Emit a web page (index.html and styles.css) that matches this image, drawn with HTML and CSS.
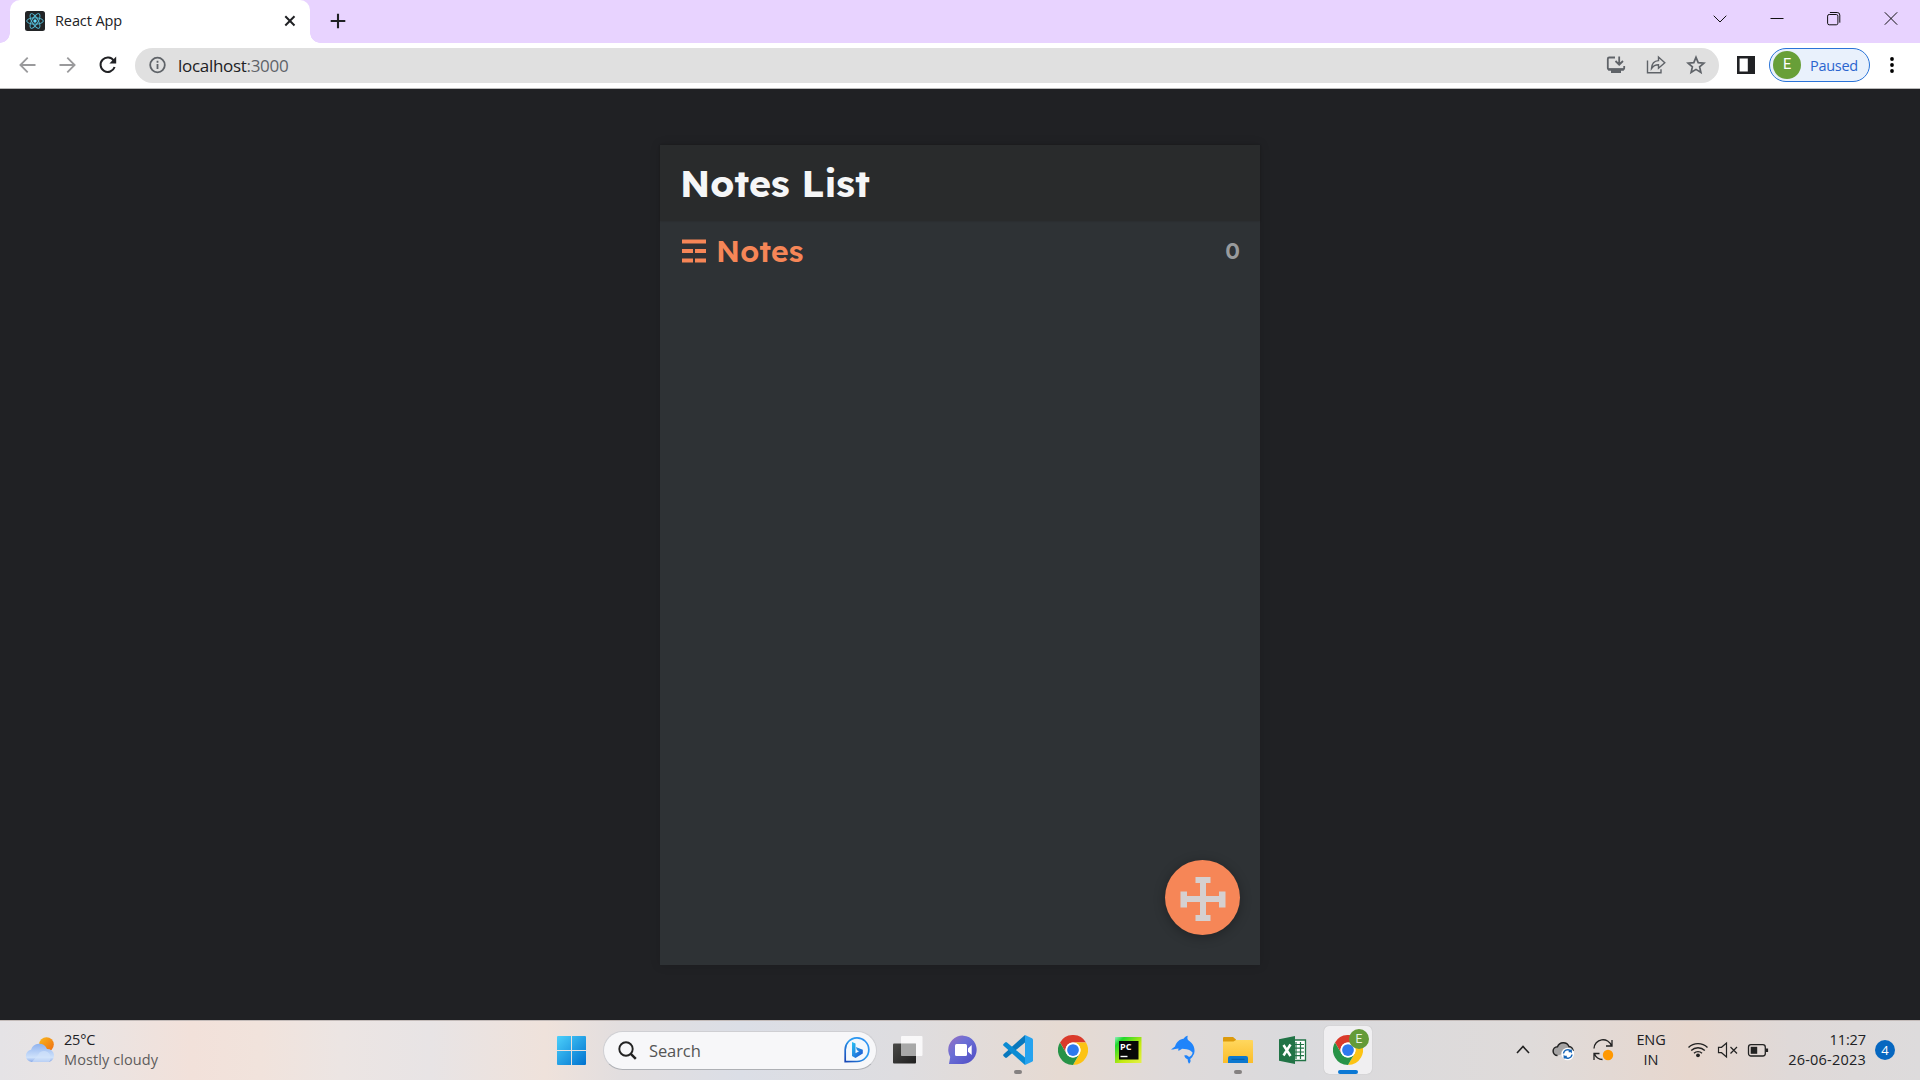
FILE: index.html
```html
<!DOCTYPE html>
<html lang="en">
<head>
<meta charset="utf-8">
<title>React App</title>
<link rel="stylesheet" href="styles.css">
</head>
<body>
<svg class="defs" width="0" height="0">
  <defs>
    <linearGradient id="win" x1="0" y1="0" x2="1" y2="1"><stop offset="0" stop-color="#4cd0fb"/><stop offset="1" stop-color="#0072cf"/></linearGradient>
    <linearGradient id="sun" x1="0" y1="0" x2="1" y2="1"><stop offset="0" stop-color="#f9b91c"/><stop offset="1" stop-color="#ef6a12"/></linearGradient>
    <linearGradient id="cloud" x1="0" y1="0" x2="0" y2="1"><stop offset="0" stop-color="#8fb2ee"/><stop offset=".75" stop-color="#cfe2fb"/><stop offset="1" stop-color="#8aaae8"/></linearGradient>
    <linearGradient id="bing" x1="0" y1="0" x2="1" y2="1"><stop offset="0" stop-color="#29c3f3"/><stop offset="1" stop-color="#1b4fd0"/></linearGradient>
    <linearGradient id="bingRing" x1="1" y1="0" x2="0" y2="1"><stop offset="0" stop-color="#2f8cf0"/><stop offset=".45" stop-color="#2a9df0"/><stop offset="1" stop-color="#1745b5"/></linearGradient>
    <linearGradient id="chat" x1="0" y1="0" x2="1" y2="1"><stop offset="0" stop-color="#9a6fc0"/><stop offset=".4" stop-color="#6b6fd6"/><stop offset="1" stop-color="#4e4bc4"/></linearGradient>
    <linearGradient id="folder" x1="0" y1="0" x2="0" y2="1"><stop offset="0" stop-color="#ffd75e"/><stop offset="1" stop-color="#fbbd2a"/></linearGradient>
    <linearGradient id="dark" x1="0" y1="0" x2="1" y2="1"><stop offset="0" stop-color="#4a4a48"/><stop offset="1" stop-color="#1f1f1f"/></linearGradient>
    <linearGradient id="pc" x1="0" y1="0" x2="1" y2="1"><stop offset="0" stop-color="#8df0c0"/><stop offset=".18" stop-color="#21d82b"/><stop offset=".6" stop-color="#c4ea10"/><stop offset="1" stop-color="#e6f04a"/></linearGradient>
    <symbol id="chrome" viewBox="0 0 48 48">
      <circle cx="24" cy="24" r="23" fill="#fff"/>
      <path fill="#da3a2b" d="M3.2 12A24 24 0 0 1 44.8 12H24A12 12 0 0 0 13.6 30Z"/>
      <path fill="#fcc314" d="M44.8 12A24 24 0 0 1 24 48L34.4 30A12 12 0 0 0 24 12Z"/>
      <path fill="#279347" d="M24 48A24 24 0 0 1 3.2 12L13.6 30A12 12 0 0 0 34.4 30Z"/>
      <circle cx="24" cy="24" r="12" fill="#fff"/><circle cx="24" cy="24" r="9.4" fill="#2e79ee"/>
    </symbol>
  </defs>
</svg>

<header class="tabstrip">
  <div class="tab">
    <svg class="favicon" viewBox="0 0 20 20"><rect width="20" height="20" rx="2.5" fill="#222426"/><g fill="none" stroke="#53bcd6" stroke-width=".95"><ellipse cx="10" cy="10" rx="8.3" ry="3.2"/><ellipse cx="10" cy="10" rx="8.3" ry="3.2" transform="rotate(60 10 10)"/><ellipse cx="10" cy="10" rx="8.3" ry="3.2" transform="rotate(120 10 10)"/></g><circle cx="10" cy="10" r="1.7" fill="#61dafb"/></svg>
    <span class="tab-title">React App</span>
    <svg class="tab-close" viewBox="0 0 12 12"><path d="M1.3 1.3l9.2 9.2M10.5 1.3l-9.2 9.2" stroke="#202124" stroke-width="2"/></svg>
  </div>
  <svg class="new-tab" viewBox="0 0 16 16"><path d="M8 .7v14.6M.7 8h14.6" stroke="#202124" stroke-width="2.1"/></svg>
  <div class="window-buttons">
    <svg viewBox="0 0 14 14"><path d="M.7 3.7L7 10l6.300-6.300" /></svg>
    <svg viewBox="0 0 14 14"><path d="M.5 6.500h13"/></svg>
    <svg viewBox="0 0 14 14"><rect x=".6" y="2.500" width="10.300" height="10.300" rx="1.600"/><path d="M2.900.5h7.300a2.600 2.600 0 0 1 2.600 2.600v7.600"/></svg>
    <svg viewBox="0 0 14 14"><path d="M.8.3l12.400 12.400M13.200.3L.8 12.700"/></svg>
  </div>
</header>

<nav class="toolbar">
  <svg class="nav-icon muted" viewBox="0 0 18 18"><path d="M16.500 9H2M8.700 1.700L1.400 9l7.300 7.300"/></svg>
  <svg class="nav-icon muted" viewBox="0 0 18 18"><path d="M.5 9H15M8.300 1.700L15.600 9l-7.300 7.300"/></svg>
  <svg class="nav-icon" viewBox="0 0 18 18"><path d="M14.800 4.800A7.200 7.200 0 1 0 15.600 11"/><path d="M17.200.6v6.800H10.400z" fill="#202124" stroke="none"/></svg>
  <div class="omnibox">
    <svg class="info" viewBox="0 0 18 18"><circle cx="8.500" cy="9" r="7.300"/><path d="M8.500 8v5M8.500 4.800v1.900"/></svg>
    <span class="url">localhost<span class="port">:3000</span></span>
    <div class="omni-actions">
      <svg viewBox="0 0 20 20"><path d="M9 2.500H3.200A1.400 1.400 0 0 0 1.800 3.900v9.200a1.400 1.400 0 0 0 1.400 1.400h13.600a1.400 1.400 0 0 0 1.400-1.400V11M13.200 1.500v8M9.500 6l3.700 3.700L17 6"/><path d="M2 13.200h16v2.200h-3v2.500H5v-2.500H2z" fill="#5f6368" stroke="none"/></svg>
      <svg viewBox="0 0 20 20"><path d="M1.500 5.500v12.200h13.500v-3.500M5.500 13.500c.3-5.200 3-7.700 7-7.900V2l6.300 5.700-6.300 5.600V9.800c-3.200 0-5.300 1.100-7 3.700z" stroke-width="1.400"/></svg>
      <svg viewBox="0 0 20 20"><path d="M10 2.300l2.200 5.300 5.700.5-4.300 3.700 1.300 5.600-4.900-3-4.900 3 1.300-5.600L2.100 8.100l5.700-.5z" stroke-width="1.700"/></svg>
    </div>
  </div>
  <svg class="panel-icon" viewBox="0 0 18 18"><path d="M0 0h18v18H0zM2.600 2.600v12.800h8.200V2.600z" fill="#202124" fill-rule="evenodd"/></svg>
  <div class="profile"><span class="avatar">E</span><span>Paused</span></div>
  <svg class="kebab" viewBox="0 0 4 16"><circle cx="2" cy="2" r="1.900"/><circle cx="2" cy="8" r="1.900"/><circle cx="2" cy="14" r="1.900"/></svg>
</nav>

<main class="page">
  <section class="app">
    <h1 class="app-header">Notes List</h1>
    <div class="notes-header">
      <svg class="list-icon" viewBox="0 0 24 24"><path fill="#f68657" d="M0 .5h24v4H0zM0 10h11v4H0zM13 10h11v4H13zM0 19.500h11v4H0zM13 19.500h11v4H13z"/></svg>
      <h2 class="notes-title">Notes</h2>
      <p class="notes-count">0</p>
    </div>
    <button class="fab" aria-label="Add note"><svg viewBox="0 0 46 46"><path fill="#d5d0d0" d="M15.500 1h15v6H26v13h13v-4.500h6.500v16H39V26H26v13h4.500v6h-15v-6H20V26H7v5.500H.5v-16H7V20h13V7h-4.500z"/></svg></button>
  </section>
</main>

<footer class="taskbar">
  <div class="weather">
    <svg viewBox="0 0 30 26"><circle cx="21.500" cy="7.500" r="7.300" fill="url(#sun)"/><path d="M6.500 25A6.200 6.200 0 0 1 6 12.700 8.500 8.500 0 0 1 22 12a6.600 6.600 0 0 1 2 13z" fill="url(#cloud)"/><path d="M13 18a6.600 6.600 0 1 1 11 7H7" fill="#d2e3fb" opacity=".65"/></svg>
    <div class="weather-text"><span>25°C</span><span class="sub">Mostly cloudy</span></div>
  </div>
  <div class="dock">
    <svg class="start" viewBox="0 0 29 29"><path fill="url(#win)" d="M1 0h13v14H0V1q0-1 1-1zM15 0h13q1 0 1 1v13H15zM0 15h14v14H1q-1 0-1-1zM15 15h14v13q0 1-1 1H15z"/></svg>
    <div class="search">
      <svg class="lens" viewBox="0 0 19 19"><circle cx="8" cy="8" r="6.700" fill="none" stroke="#222" stroke-width="1.900"/><path d="M12.800 12.800l5 5" stroke="#222" stroke-width="2.500"/></svg>
      <span>Search</span>
      <svg class="bing" viewBox="0 0 26 26"><path d="M1.200 24.600V13A11.800 11.800 0 1 1 13 24.500z" fill="#f3f8fd" stroke="url(#bingRing)" stroke-width="1.700"/><path d="M8 5l3.500 1.500v9.800l3.500-2-2-1-1.200-3.200 7 2.700v3.700L11.500 21 8 19z" fill="url(#bing)"/></svg>
    </div>
    <div class="tile"><svg viewBox="0 0 30 30"><rect x="0" y="8.500" width="23" height="20" rx="1" fill="url(#dark)"/><rect x="8" y="1" width="21.500" height="20" rx="1" fill="#fff" opacity=".8"/><path d="M8 8.500h15v12.500H8z" fill="#898989" opacity=".6"/></svg></div>
    <div class="tile"><svg viewBox="0 0 30 30"><path d="M1 29l1.200-7A14.200 14.200 0 1 1 15 29z" fill="url(#chat)"/><rect x="7" y="9" width="12" height="12" rx="1.500" fill="#fff"/><path d="M20 13.500l3.700-3.500v10L20 16.700z" fill="#fff"/></svg></div>
    <div class="tile running"><svg viewBox="0 0 30 30"><path d="M22 0v7.500L4 22.500q-1 .8-1.900 0L.5 21Q-.3 20 .6 19.200z" fill="#0878bd"/><path d="M22 30v-7.500L4 7.500q-1-.8-1.900 0L.5 9q-.8 1 .1 1.800z" fill="#0a8bd3"/><path d="M22 0l7 3.200q1 .5 1 1.500v20.600q0 1-1 1.500L22 30z" fill="#26a3ef"/></svg></div>
    <div class="tile"><svg viewBox="0 0 30 30"><use href="#chrome"/></svg></div>
    <div class="tile"><svg viewBox="0 0 30 30"><rect x="2" y="2" width="26.500" height="26" fill="url(#pc)"/><rect x="6" y="6" width="19.500" height="18.500" fill="#080808"/><text x="7" y="14.700" class="pc-label">PC</text><path d="M7.500 21.500h7" stroke="#fff" stroke-width="1.400"/></svg></div>
    <div class="tile"><svg viewBox="0 0 30 30"><path d="M3 14.500l4-3C8.500 6.500 12 4 15.500 3.700 17 1.700 18.500 1 19.800.8c-.6 1.700-.5 2.800.2 4.200 5.500 3.500 8.300 9.500 5.500 15.500-.5-4.500-4.500-6.500-11.500-6.700-1.500 1.300-3.200 2-4 1.700l.6-2c-2.500.3-4.500 1-7.600 1z" fill="#2084fa"/><path d="M25.400 18.500c-.3 3-1.500 4.300-3.200 5.500.8 2 .3 3.500-1.200 4.700-.8-1.400-1.400-2.700-1.200-4.300-1.600-.7-3.300-2-3.500-4 2.200-.3 3.700.2 4.700 1.500 2-.8 3-2 3.500-4z" fill="#2084fa"/></svg></div>
    <div class="tile running"><svg viewBox="0 0 30 30"><path d="M0 3q0-1 1-1h9l3 2.500v5H0z" fill="#dc9a0c"/><path d="M0 6.500h10.500L13 5h16q1 0 1 1v22H0z" fill="url(#folder)"/><path d="M5 28v-5q0-2 2-2h16q2 0 2 2v5z" fill="#0d78cf"/><path d="M8.500 24.300h13" stroke="#075aa0"/></svg></div>
    <div class="tile"><svg viewBox="0 0 30 30"><path d="M15 5h12.500v20.500H15z" fill="#fff" stroke="#217346" stroke-width="1.300"/><path d="M18 7v17M22.500 7v17M16 9.500h10M16 13.200h10M16 17h10M16 20.700h10" stroke="#217346" stroke-width="1.200"/><path d="M1 4.200L17 1v28L1 25.800z" fill="#217346"/><path d="M5.500 10l7 11M12.500 9.500L5.500 20.500" stroke="#fff" stroke-width="2.500"/></svg></div>
    <div class="tile running active"><svg viewBox="0 0 30 30"><use href="#chrome"/></svg><span class="app-badge">E</span></div>
  </div>
  <div class="tray">
    <svg viewBox="0 0 22 22"><path d="M5 14l6-6.500 6 6.500" stroke-width="1.600"/></svg>
    <svg viewBox="0 0 22 22"><path d="M5.500 16.500a4.400 4.400 0 0 1 0-8.800A6.200 6.200 0 0 1 17 7.500a4.300 4.300 0 0 1 4 4.500" fill="#a5a3a3" stroke-width="1.500"/><circle cx="15.700" cy="15" r="6.300" fill="#fff" stroke="none"/><path d="M11.500 14.500a4.300 4.300 0 0 1 7.700-2v-2M19.200 12.500h-2.500M20 15.500a4.300 4.300 0 0 1-7.700 2v2M12.300 17.500h2.500" stroke="#1565b8" stroke-width="1.400"/></svg>
    <svg viewBox="0 0 22 22"><path d="M2 9.500A9 9 0 0 1 19.500 6.800M20 1v6h-6M2 21v-6.500h5.500M2.500 15a9 9 0 0 0 8 5.500" stroke-width="1.300"/><circle cx="16" cy="16" r="5.200" fill="#ff9800" stroke="none"/></svg>
    <div class="lang"><span>ENG</span><span>IN</span></div>
    <svg class="slim" viewBox="0 0 22 22"><path d="M1.500 8.500a13.500 13.500 0 0 1 19 0M4.200 11.500a9.700 9.700 0 0 1 13.600 0M7 14.300a5.700 5.700 0 0 1 8 0" stroke-width="1.400"/><circle cx="11" cy="16.300" r="1.900" fill="#222" stroke="none"/></svg>
    <svg class="slim" viewBox="0 0 22 22"><path d="M1.500 8.300h3L9.500 4v14l-5-4.300h-3zM13.500 8l6.500 6.500M20 8l-6.500 6.500" stroke-width="1.200"/></svg>
    <svg class="slim" viewBox="0 0 22 22"><rect x="1.500" y="5.700" width="16.800" height="11.300" rx="2.500" stroke-width="1.300"/><rect x="3.700" y="7.800" width="6.500" height="7" fill="#222" stroke="none"/><path d="M20 9.500v3.500" stroke-width="2.200"/></svg>
    <div class="clock"><span>11:27</span><span class="date">26-06-2023</span></div>
    <span class="count">4</span>
  </div>
</footer>
</body>
</html>
```

FILE: styles.css
```css
* { box-sizing: border-box; }
body {
  margin: 0;
  width: 1920px;
  height: 1080px;
  overflow: hidden;
  display: grid;
  grid-template-rows: 43px 46px 931px 60px;
  font-family: "Open Sans", "Noto Sans", sans-serif;
  color: #202124;
}
svg { display: block; flex: none; }
.defs { position: absolute; }
span { white-space: nowrap; }

.tabstrip {
  display: flex;
  align-items: stretch;
  padding-left: 10px;
  background: #e8d3ff;
}
.tab {
  position: relative;
  width: 300px;
  padding: 0 15px 1px;
  display: flex;
  align-items: center;
  background: #fff;
  border-radius: 10px 10px 0 0;
}
.tab::before, .tab::after {
  content: "";
  position: absolute;
  bottom: 0;
  width: 10px;
  height: 10px;
}
.tab::before { left: -10px; background: radial-gradient(circle at 0 0, #e8d3ff 9.5px, #fff 10px); }
.tab::after { right: -10px; background: radial-gradient(circle at 100% 0, #e8d3ff 9.5px, #fff 10px); }
.favicon { width: 20px; height: 20px; }
.tab-title { margin-left: 10px; font-size: 14.5px; letter-spacing: -0.1px; line-height: 20px; }
.tab-close { width: 12px; height: 12px; margin-left: auto; margin-right: -1px; }
.new-tab { width: 16px; height: 16px; margin: 13px 0 0 19.500px; }
.window-buttons { margin-left: auto; display: flex; padding: 12px 22px 0 0; gap: 43px; }
.window-buttons svg { width: 14px; height: 14px; fill: none; stroke: #111; stroke-width: 1; }

.toolbar {
  display: flex;
  align-items: center;
  background: #fff;
  border-bottom: 1px solid #b9b9b9;
  padding: 0 26px 1px 19px;
}
.nav-icon { width: 18px; height: 18px; margin-right: 22px; fill: none; stroke: #202124; stroke-width: 2; }
.nav-icon.muted { stroke: #9a9a9c; stroke-width: 1.8; }
.omnibox {
  width: 1584px;
  height: 35px;
  margin-left: -4px;
  padding: 0 13px 0 14px;
  display: flex;
  align-items: center;
  border-radius: 18px;
  background: #e0e0e0;
}
.info { width: 18px; height: 18px; fill: none; stroke: #5f6368; stroke-width: 1.8; }
.url { margin-left: 11px; font-size: 17px; letter-spacing: -0.3px; }
.port { color: #5f6368; }
.omni-actions { margin-left: auto; display: flex; gap: 20px; }
.omni-actions svg { width: 20px; height: 20px; fill: none; stroke: #5f6368; stroke-width: 1.8; }
.panel-icon { width: 18px; height: 18px; margin-left: 18px; }
.profile {
  display: flex;
  align-items: center;
  width: 101px;
  height: 34px;
  margin-left: 14px;
  padding-left: 3px;
  gap: 9px;
  border: 1.500px solid #2a74d8;
  border-radius: 17px;
  background: #e9f1fc;
  color: #2a64cf;
  font-size: 14.5px;
  letter-spacing: -0.3px;
}
.avatar {
  width: 28px;
  height: 28px;
  border-radius: 50%;
  background: #689f38;
  color: #fff;
  text-align: center;
  line-height: 28px;
  font-family: Roboto, sans-serif;
}
.kebab { width: 4px; height: 16px; margin-left: auto; }

.page { background: #202124; display: flex; justify-content: center; align-items: flex-start; padding-top: 56px; }
.app {
  position: relative;
  width: 600px;
  height: 820px;
  background: #2e3235;
  font-family: Lexend, Inter, sans-serif;
  box-shadow: 0 0 10px rgba(0, 0, 0, .14);
}
.app-header {
  height: 76px;
  margin: 0;
  padding: 0 20px;
  line-height: 75px;
  font-size: 37.5px;
  font-weight: 700;
  color: #f5f6f7;
  background: #292b2c;
  box-shadow: 0 0 2px rgba(0, 0, 0, .2);
}
.notes-header { display: flex; align-items: center; height: 60px; padding: 0 20px 0 22px; }
.list-icon { width: 24px; height: 24px; }
.notes-title { margin: 0 0 0 10px; font-size: 30px; font-weight: 600; letter-spacing: 0.1px; color: #f68657; }
.notes-count { margin: 0 0 0 auto; padding-bottom: 2px; font-size: 22.5px; font-weight: 600; color: #999b9d; }
.fab {
  position: absolute;
  right: 20px;
  bottom: 30px;
  width: 75px;
  height: 75px;
  padding: 0;
  display: grid;
  place-items: center;
  border: 0;
  border-radius: 50%;
  background: #f68657;
  box-shadow: 0 2px 12px rgba(0, 0, 0, .3);
}
.fab svg { width: 46px; height: 46px; margin: 2px 0 0 0; }

.taskbar {
  display: grid;
  grid-template-columns: 557px 946px 1fr;
  align-items: center;
  padding-bottom: 1px;
  border-top: 1px solid #c3bbb9;
  background: linear-gradient(90deg, #e5e3e6 0, #eae4e3 90px, #f2e1da 190px, #f1e3dc 260px, #ece5e3 340px, #e8e4e5 430px, #efe2db 545px, #e2dedf 620px, #dbdee6 740px, #dedde0 900px, #e6dad2 1060px, #dfdada 1170px, #dadadd 1300px, #dfdbda 1530px, #e7d7ce 1690px, #dfd9d8 1790px, #dddbdc 1920px);
}
.weather { display: flex; align-items: center; padding-left: 25px; }
.weather > svg { width: 30px; height: 26px; }
.weather-text { display: flex; flex-direction: column; margin-left: 9px; font-size: 14.5px; line-height: 20px; letter-spacing: -0.2px; }
.weather-text .sub { color: #5e5c5c; letter-spacing: 0.1px; }
.dock { display: flex; align-items: center; }
.start { width: 29px; height: 29px; }
.search {
  width: 274px;
  height: 39px;
  margin-left: 17px;
  margin-right: 3px;
  padding: 0 6px 0 14px;
  display: flex;
  align-items: center;
  border: 1px solid #cfcfd3;
  border-bottom-color: #aeb0b5;
  border-radius: 20px;
  background: #f7f7f9;
  color: #555;
  font-size: 16.5px;
}
.search span { margin-left: 12px; letter-spacing: -0.1px; }
.lens { width: 19px; height: 19px; }
.bing { width: 26px; height: 26px; margin-left: auto; }
.tile { position: relative; width: 55px; height: 48px; display: grid; place-items: center; }
.tile svg { width: 30px; height: 30px; }
.running::after {
  content: "";
  position: absolute;
  left: 24px;
  bottom: 0;
  width: 8px;
  height: 4px;
  border-radius: 2px;
  background: #858181;
}
.active { width: 48px; margin-left: 4px; background: #f0eff1; border-radius: 5px; box-shadow: 0 0 1px #aaa; }
.active::after { left: 14px; width: 20px; background: #0b78d4; }
.app-badge {
  position: absolute;
  left: 25px;
  top: 3px;
  width: 20px;
  height: 20px;
  border-radius: 50%;
  background: #649b38;
  color: #e9f2e2;
  text-align: center;
  font: 12px/20px Roboto, sans-serif;
}
.pc-label { font: 700 9px "Open Sans", sans-serif; fill: #fff; }
.tray { display: flex; align-items: center; }
.tray svg { width: 40px; height: 22px; fill: none; stroke: #222; }
.tray .slim { width: 30px; }
.lang, .clock { display: flex; flex-direction: column; font-size: 14.500px; line-height: 20px; letter-spacing: -0.1px; }
.lang { width: 56px; margin-right: 4px; align-items: center; }
.clock { width: 93px; align-items: flex-end; }
.clock .date { letter-spacing: 0.22px; }
.count {
  width: 20px;
  height: 20px;
  margin-left: 9px;
  border-radius: 50%;
  background: #0667c0;
  color: #fff;
  font-size: 13px;
  line-height: 20px;
  text-align: center;
}
```
